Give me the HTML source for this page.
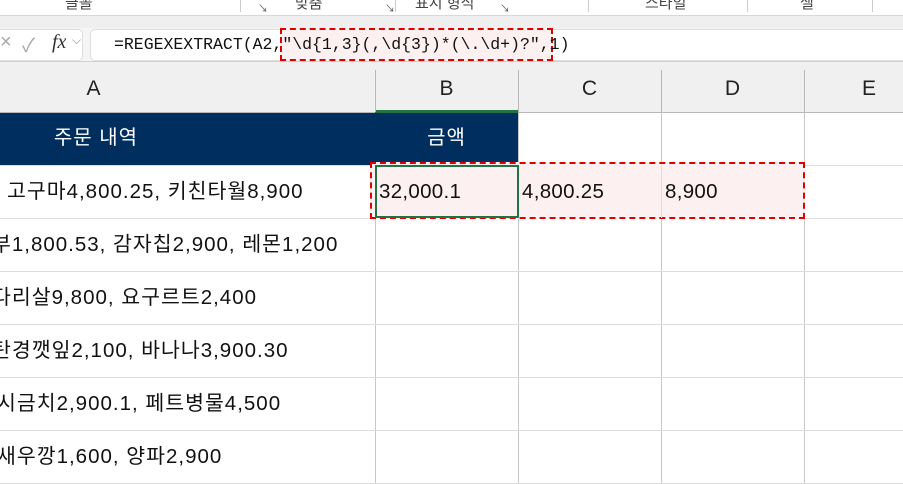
<!DOCTYPE html>
<html><head><meta charset="utf-8"><style>
*{margin:0;padding:0;box-sizing:border-box}
body{width:903px;height:484px;overflow:hidden;background:#fff;font-family:"Liberation Sans","Noto Sans CJK KR",sans-serif;position:relative}
.a{position:absolute}
.rib{left:0;top:0;width:903px;height:16px;background:#fff;border-bottom:1px solid #d8d8d8}
.rl{top:-8px;font-size:15px;color:#444}
.gb{top:16px;left:0;width:903px;height:12px;background:#efefef}
.fb{top:28px;left:0;width:903px;height:34px;background:#f5f5f5;border-bottom:1px solid #d0d0d0}
.hd{top:62px;left:0;width:903px;height:51px;background:#f0f0f0;border-bottom:1px solid #b8b8b8}
.ch{top:62px;height:51px;font-size:21px;color:#222;text-align:center;line-height:54px}
.vl{width:1px;background:#c8c8c8}
.hl{height:1px;background:#dcdcdc;left:0;width:903px}
.cell{font-size:20.5px;letter-spacing:1px;color:#111;line-height:53px;height:53px;white-space:nowrap}
.num{font-size:20.5px;letter-spacing:0.3px}
</style></head><body>
<div class="a rib"></div>
<div class="a rl" style="left:65px">글꼴</div>
<div class="a rl" style="left:295px">맞춤</div>
<div class="a rl" style="left:415px">표시 형식</div>
<div class="a rl" style="left:645px">스타일</div>
<div class="a rl" style="left:800px">셀</div>
<div class="a" style="left:258px;top:0;font-size:10px;color:#555">↘</div>
<div class="a" style="left:385px;top:0;font-size:10px;color:#555">↘</div>
<div class="a" style="left:500px;top:0;font-size:10px;color:#555">↘</div>
<div class="a" style="left:240px;top:0;width:1px;height:12px;background:#ccc"></div>
<div class="a" style="left:395px;top:0;width:1px;height:12px;background:#ccc"></div>
<div class="a" style="left:588px;top:0;width:1px;height:12px;background:#ccc"></div>
<div class="a" style="left:747px;top:0;width:1px;height:12px;background:#ccc"></div>
<div class="a" style="left:872px;top:0;width:1px;height:12px;background:#ccc"></div>
<div class="a gb"></div>
<div class="a fb"></div>
<div class="a" style="left:-5px;top:29px;width:88px;height:32px;background:#fff;border:1px solid #ddd;border-radius:5px"></div>
<div class="a" style="left:0;top:31px;font-size:20px;color:#aaa">×</div>
<div class="a" style="left:22px;top:31px;font-size:19px;color:#aaa">✓</div>
<div class="a" style="left:52px;top:31px;font-size:20px;font-style:italic;font-family:'Liberation Serif',serif;color:#333">fx</div>
<div class="a" style="left:72px;top:33px;font-size:12px;color:#888">⌵</div>
<div class="a" style="left:90px;top:29px;width:820px;height:32px;background:#fff;border:1px solid #ddd;border-radius:5px"></div>
<div class="a" style="left:280px;top:28px;width:273px;height:33px;background:#fdf0f0;border:2px dashed #e00000"></div>
<div class="a" style="left:114px;top:35px;font-family:'Liberation Mono','DejaVu Sans Mono',monospace;font-size:16.5px;color:#111;white-space:pre">=REGEXEXTRACT(A2,"\d{1,3}(,\d{3})*(\.\d+)?",1)</div>
<div class="a hd"></div>
<div class="a" style="left:375px;top:110px;width:143px;height:3px;background:#217346"></div>
<div class="a ch" style="left:-188px;width:563px">A</div>
<div class="a ch" style="left:375px;width:143px">B</div>
<div class="a ch" style="left:518px;width:143px">C</div>
<div class="a ch" style="left:661px;width:143px">D</div>
<div class="a ch" style="left:804px;width:130px">E</div>
<div class="a vl" style="left:375px;top:70px;height:42px;background:#b8b8b8"></div>
<div class="a vl" style="left:518px;top:70px;height:42px;background:#b8b8b8"></div>
<div class="a vl" style="left:661px;top:70px;height:42px;background:#b8b8b8"></div>
<div class="a vl" style="left:804px;top:70px;height:42px;background:#b8b8b8"></div>
<div class="a vl" style="left:375px;top:113px;height:371px"></div>
<div class="a vl" style="left:518px;top:113px;height:371px"></div>
<div class="a vl" style="left:661px;top:113px;height:371px"></div>
<div class="a vl" style="left:804px;top:113px;height:371px"></div>
<div class="a hl" style="top:165px"></div>
<div class="a hl" style="top:218px"></div>
<div class="a hl" style="top:271px"></div>
<div class="a hl" style="top:324px"></div>
<div class="a hl" style="top:377px"></div>
<div class="a hl" style="top:430px"></div>
<div class="a hl" style="top:483px"></div>
<div class="a" style="left:0;top:113px;width:518px;height:52px;background:#002f5f"></div>
<div class="a" style="left:0;top:113px;width:192px;height:52px;line-height:50px;color:#fff;font-size:20px;letter-spacing:1px;text-align:center">주문 내역</div>
<div class="a" style="left:375px;top:113px;width:143px;height:52px;line-height:50px;color:#fff;font-size:20px;letter-spacing:1px;text-align:center">금액</div>
<div class="a" style="left:370px;top:162px;width:435px;height:57px;background:#fdf0f0;border:2px dashed #e00000"></div>
<div class="a" style="left:518px;top:165px;width:1px;height:53px;background:#ddd"></div>
<div class="a" style="left:661px;top:165px;width:1px;height:53px;background:#ddd"></div>
<div class="a" style="left:375px;top:165px;width:144px;height:53px;border:2px solid #217346"></div>
<div class="a cell" style="left:7px;top:165px">고구마4,800.25, 키친타월8,900</div>
<div class="a cell num" style="left:379px;top:165px">32,000.1</div>
<div class="a cell num" style="left:522px;top:165px">4,800.25</div>
<div class="a cell num" style="left:665px;top:165px">8,900</div>
<div class="a cell" style="left:-8px;top:218px">부1,800.53, 감자칩2,900, 레몬1,200</div>
<div class="a cell" style="left:-8px;top:271px">다리살9,800, 요구르트2,400</div>
<div class="a cell" style="left:-8px;top:324px">탄경깻잎2,100, 바나나3,900.30</div>
<div class="a cell" style="left:-3px;top:377px">시금치2,900.1, 페트병물4,500</div>
<div class="a cell" style="left:-3px;top:430px">새우깡1,600, 양파2,900</div>
</body></html>
